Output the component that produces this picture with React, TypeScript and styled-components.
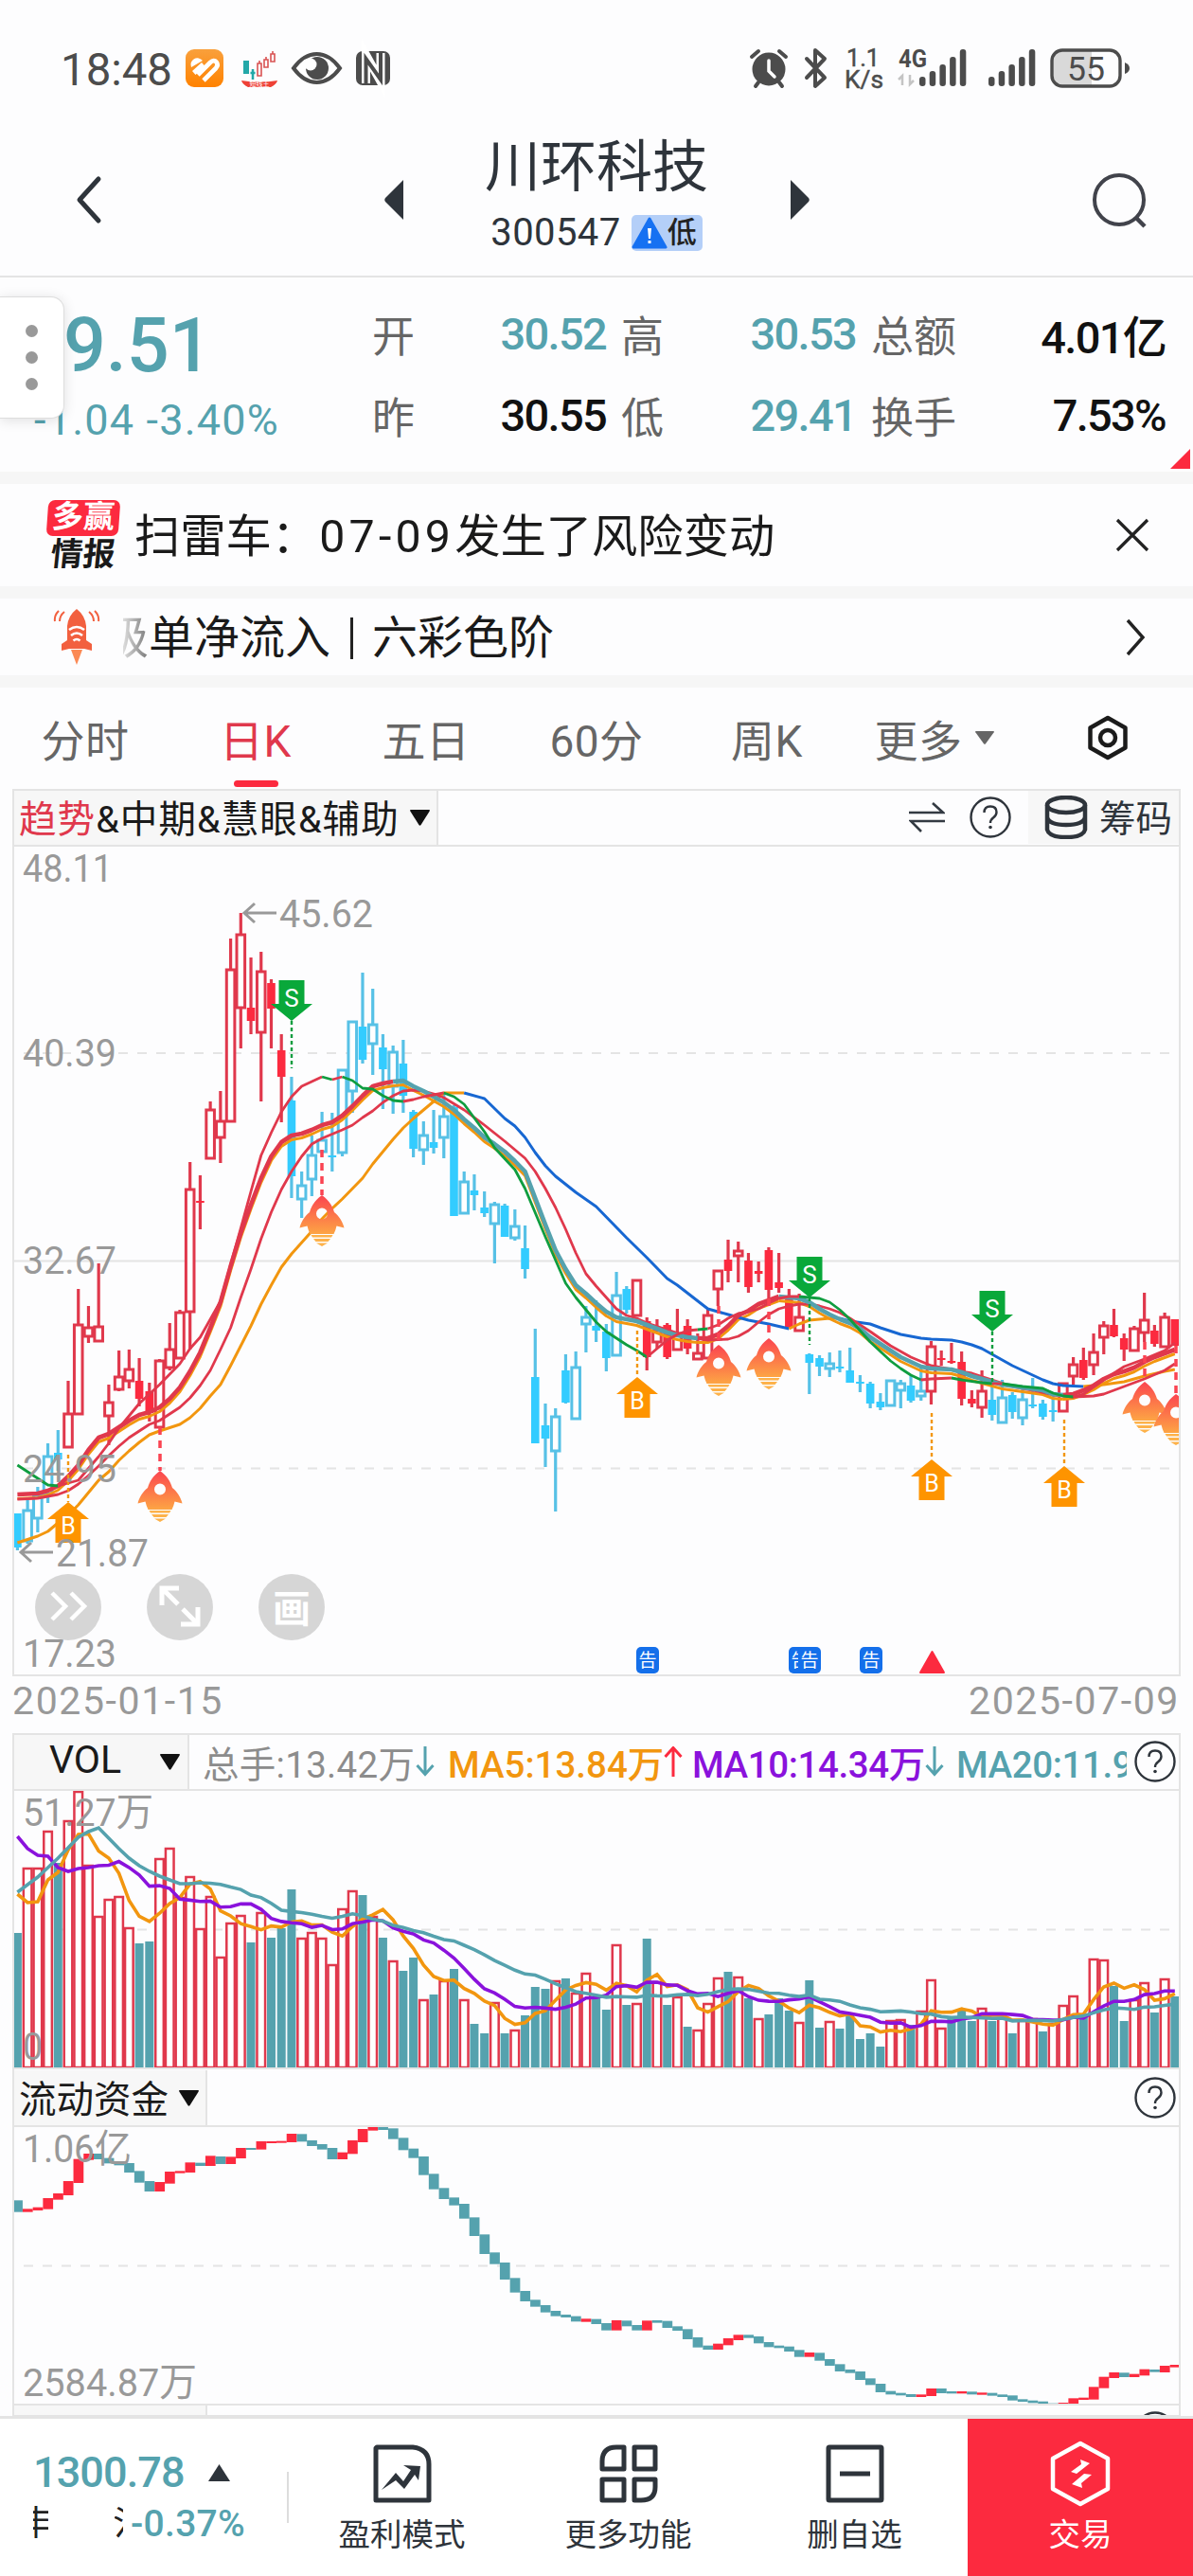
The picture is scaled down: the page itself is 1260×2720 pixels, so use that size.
import styled, { createGlobalStyle, css } from 'styled-components';

const RED = '#fc2a3f';
const RED_LINE = '#e0384c';
const TEAL = '#55a2ae';
const CYAN = '#33ccff';
const CYAN_LINE = '#57c1e6';
const ORANGE = '#f2960f';
const PURPLE = '#8a12dc';
const GREEN = '#0f9d3f';
const BLUE = '#1767d2';
const DARK = '#2e343b';
const LINE = '#e4e4e4';

// candle slots: 115 trading days between the left and right frame
const STEP = 10.723;
const cx = (i: number) => 18.4 + STEP * i;

type Candle = [kind: string, high: number, top: number, bottom: number, low: number];

// R/C = red/cyan solid body, r/c = red/cyan outlined body
const CANDLES: Candle[] = [
  ['C', 1598, 1598, 1634, 1637], ['c', 1581, 1595, 1627, 1630], ['c', 1570, 1579, 1603, 1618],
  ['c', 1524, 1538, 1577, 1587], ['C', 1510, 1534, 1541, 1553], ['r', 1458, 1493, 1528, 1528],
  ['r', 1361, 1399, 1493, 1493], ['r', 1379, 1402, 1411, 1418], ['r', 1334, 1401, 1416, 1416],
  ['r', 1462, 1481, 1495, 1526], ['r', 1426, 1454, 1467, 1469], ['r', 1425, 1446, 1458, 1466],
  ['R', 1434, 1458, 1477, 1485], ['R', 1460, 1469, 1492, 1501], ['r', 1435, 1437, 1507, 1507],
  ['r', 1397, 1425, 1444, 1447], ['r', 1383, 1386, 1434, 1434], ['r', 1227, 1256, 1385, 1425],
  ['R', 1241, 1268, 1270, 1298], ['r', 1163, 1172, 1223, 1223], ['r', 1152, 1184, 1201, 1228],
  ['r', 991, 1024, 1184, 1184], ['r', 964, 987, 1064, 1107], ['R', 1011, 1064, 1078, 1092],
  ['r', 1005, 1026, 1090, 1163], ['R', 1034, 1038, 1065, 1107], ['R', 1092, 1109, 1137, 1185],
  ['C', 1137, 1162, 1242, 1265], ['c', 1237, 1252, 1266, 1286], ['c', 1199, 1220, 1245, 1263],
  ['c', 1174, 1204, 1216, 1216], ['C', 1175, 1220, 1222, 1237], ['c', 1129, 1130, 1217, 1221],
  ['c', 1078, 1079, 1152, 1175], ['C', 1027, 1084, 1119, 1123], ['c', 1044, 1082, 1102, 1135],
  ['C', 1092, 1106, 1129, 1171], ['c', 1104, 1111, 1147, 1176], ['C', 1098, 1123, 1157, 1175],
  ['C', 1172, 1174, 1213, 1222], ['c', 1184, 1199, 1214, 1230], ['C', 1172, 1206, 1212, 1218],
  ['c', 1155, 1179, 1201, 1223], ['C', 1167, 1169, 1284, 1284], ['c', 1237, 1248, 1281, 1281],
  ['C', 1240, 1257, 1262, 1278], ['C', 1258, 1275, 1281, 1285], ['c', 1269, 1272, 1292, 1334],
  ['C', 1271, 1273, 1306, 1306], ['c', 1277, 1295, 1307, 1310], ['C', 1294, 1318, 1340, 1350],
  ['C', 1403, 1454, 1524, 1524], ['C', 1482, 1505, 1519, 1549], ['c', 1487, 1496, 1532, 1596],
  ['C', 1430, 1447, 1481, 1482], ['c', 1427, 1444, 1498, 1498], ['c', 1379, 1391, 1398, 1428],
  ['C', 1373, 1400, 1405, 1417], ['C', 1398, 1406, 1434, 1448], ['c', 1343, 1368, 1431, 1431],
  ['C', 1358, 1361, 1383, 1387], ['r', 1352, 1352, 1389, 1390], ['R', 1391, 1395, 1433, 1447],
  ['r', 1393, 1405, 1417, 1424], ['R', 1397, 1399, 1433, 1435], ['r', 1382, 1408, 1425, 1425],
  ['R', 1393, 1400, 1424, 1430], ['r', 1408, 1429, 1435, 1435], ['r', 1382, 1389, 1434, 1434],
  ['r', 1342, 1342, 1361, 1379], ['R', 1309, 1330, 1342, 1354], ['r', 1311, 1321, 1326, 1354],
  ['R', 1323, 1331, 1359, 1365], ['R', 1332, 1342, 1345, 1354], ['R', 1317, 1320, 1362, 1371],
  ['R', 1323, 1354, 1360, 1365], ['R', 1361, 1372, 1402, 1402], ['r', 1366, 1391, 1405, 1405],
  ['C', 1429, 1430, 1439, 1472], ['C', 1431, 1434, 1443, 1453], ['c', 1428, 1440, 1445, 1454],
  ['C', 1426, 1443, 1445, 1449], ['C', 1423, 1447, 1460, 1460], ['C', 1452, 1459, 1461, 1470],
  ['C', 1459, 1461, 1482, 1487], ['C', 1471, 1480, 1486, 1489], ['c', 1458, 1458, 1484, 1484],
  ['c', 1457, 1461, 1468, 1487], ['C', 1453, 1463, 1479, 1481], ['c', 1443, 1469, 1474, 1479],
  ['r', 1416, 1422, 1469, 1483], ['R', 1426, 1434, 1436, 1442], ['R', 1418, 1437, 1439, 1440],
  ['R', 1427, 1438, 1477, 1484], ['R', 1468, 1477, 1482, 1486], ['r', 1447, 1469, 1486, 1497],
  ['C', 1462, 1478, 1494, 1500], ['c', 1457, 1476, 1502, 1502], ['C', 1470, 1473, 1491, 1498],
  ['c', 1466, 1478, 1497, 1505], ['C', 1455, 1483, 1485, 1487], ['C', 1478, 1482, 1496, 1499],
  ['C', 1473, 1489, 1491, 1501], ['r', 1461, 1461, 1490, 1490], ['r', 1433, 1441, 1453, 1462],
  ['R', 1423, 1436, 1455, 1457], ['r', 1408, 1428, 1441, 1452], ['r', 1395, 1400, 1412, 1430],
  ['R', 1382, 1399, 1411, 1412], ['R', 1408, 1413, 1425, 1437], ['r', 1400, 1403, 1426, 1426],
  ['r', 1365, 1394, 1407, 1417], ['R', 1399, 1405, 1419, 1422], ['r', 1386, 1391, 1422, 1422],
  ['R', 1393, 1393, 1421, 1421],
];

// each part is "slot,y slot,y ..."; a new part starts where the colour flips
type Part = [color: string, points: string];

const TREND: Part[] = [
  [RED_LINE, '0,1578 2,1577 3,1574 4,1569 5,1559 6,1547 7,1531 8,1518 9,1514 10,1507 11,1500 12,1494 13,1491 14,1486 15,1477 16,1465 17,1448 18,1428 19,1402 20,1375 21,1337 22,1302 23,1272 24,1244 25,1221 26,1206 27,1199 28,1197 29,1193 30,1188 31,1185 32,1178 33,1168 34,1157 35,1147 36,1144 37,1142'],
  [TEAL, '37,1142 38,1141 39,1147 40,1152 41,1158 42,1164 43,1172 44,1182 45,1191 46,1201 47,1208 48,1216 49,1226 50,1237 51,1265 52,1293 53,1320 54,1340 55,1357 56,1366 57,1376 58,1385 59,1391 60,1393 61,1395 62,1399 63,1403 64,1407 65,1410 66,1412 67,1413'],
  [RED_LINE, '67,1413 68,1413 69,1409 70,1400 71,1389 72,1384 73,1377 74,1373 75,1369'],
  [TEAL, '75,1369 76,1370 77,1371 78,1375 79,1382 80,1388 81,1393 82,1397 83,1403 84,1412 85,1419 86,1426 87,1433 88,1438 89,1443 90,1445 92,1446 93,1449 94,1453 95,1456 96,1459 97,1462 99,1465 101,1468 102,1472 103,1473'],
  [RED_LINE, '103,1473 104,1472 105,1468 106,1463 107,1456 108,1451 109,1448 110,1444 111,1438 112,1433 113,1429 114,1425'],
];

const FAST: Part[] = [
  [GREEN, '0,1547 1,1554 2,1561 3,1568 4,1569'],
  [RED_LINE, '4,1569 5,1566 6,1563 8,1538 9,1524 10,1508 11,1495 12,1482 13,1472 14,1462 15,1451 16,1440 17,1424 18,1412 19,1393 20,1374 21,1335 22,1297 23,1258 24,1220 25,1196 26,1174 27,1158 28,1147 29,1142 30,1137'],
  [GREEN, '30,1137 31,1140'],
  [RED_LINE, '31,1140 32,1137'],
  [GREEN, '32,1137 33,1141 34,1149 35,1150 36,1157 37,1162 38,1163'],
  [RED_LINE, '38,1163 39,1161 40,1158 41,1156 42,1154'],
  [GREEN, '42,1154 43,1158 44,1166 46,1195 47,1212 49,1235 50,1255 52,1306 54,1355 55,1370 57,1396 58,1406 60,1420 61,1426 62,1433'],
  [RED_LINE, '62,1433 63,1424 64,1415 65,1409 66,1405 67,1404'],
  [GREEN, '67,1404 68,1403'],
  [RED_LINE, '68,1403 69,1399 70,1392 71,1387 72,1385 73,1382 74,1376 75,1371 76,1369 77,1369'],
  [GREEN, '77,1369 78,1370 79,1371 80,1375 81,1383 82,1393 84,1417 86,1437 87,1445 88,1452 89,1457'],
  [RED_LINE, '89,1457 90,1456 92,1455'],
  [GREEN, '92,1455 93,1457 95,1460 96,1461'],
  [RED_LINE, '96,1461 97,1461'],
  [GREEN, '97,1461 99,1464 101,1466 102,1471 103,1474 104,1475'],
  [RED_LINE, '104,1475 105,1472 107,1457 109,1443 111,1435 113,1426 114,1418'],
];

const MID: Part[] = [
  [RED_LINE, '0,1583 2,1582 4,1578 5,1574 6,1567 7,1558 8,1548 9,1537 10,1527 11,1518 12,1511 13,1504 14,1500 15,1493 16,1486 17,1476 18,1463 19,1447 20,1425 21,1402 22,1370 23,1340 24,1308 25,1280 26,1256 27,1237 28,1221 29,1208 30,1202 32,1193 33,1188 34,1180 35,1173 36,1164 37,1157 38,1152 39,1151 40,1152 41,1155 42,1159 44,1172 46,1188 48,1205 50,1223 51,1237 52,1255 53,1275 54,1298 55,1323 56,1345 57,1358 58,1370 59,1382 60,1389 61,1392 62,1397 64,1404 66,1411 68,1415 70,1414 71,1411 72,1405 73,1396 74,1388 75,1382 76,1379 77,1377 78,1377 79,1379 80,1382 81,1386 82,1392 83,1399 84,1406 86,1421 88,1433 90,1442 92,1446 94,1450 96,1457 98,1464 100,1468 102,1473 104,1475 106,1474 107,1472 109,1464 111,1456 113,1447 114,1440'],
];

const SLOW: Part[] = [
  [ORANGE, '0,1629 2,1622 3,1617 4,1608 5,1600 6,1589 7,1576 8,1563 9,1554 10,1542 11,1532 12,1523 13,1515 14,1511 16,1504 17,1497 18,1487 19,1474 20,1462 21,1442 22,1421 23,1400 24,1377 25,1357 26,1338 27,1324 29,1300 30,1287 31,1276 32,1266 34,1244 35,1229 37,1203 38,1191 39,1181 40,1172 42,1154 44,1154'],
  [BLUE, '44,1154 46,1160 48,1181 49,1189 50,1201 51,1217 52,1231 53,1242 55,1259 57,1274 60,1307 62,1328 64,1350 65,1357 68,1382 70,1388 72,1394 74,1398 76,1403'],
  [ORANGE, '76,1403 77,1398 78,1394 80,1392 81,1392'],
  [BLUE, '81,1392 82,1395 84,1398 85,1402 87,1409 89,1413 90,1414 92,1415 93,1417 94,1420 95,1424 96,1430 98,1442 99,1447 101,1457 102,1461 103,1463 105,1464'],
  [ORANGE, '105,1464 107,1462 109,1459 111,1453 113,1448 114,1446'],
];

const VOL_UP = [1, 2, 3, 5, 6, 7, 8, 9, 10, 11, 14, 15, 16, 17, 18, 19, 20, 21, 22, 24, 28, 29, 30, 31, 32, 33, 35, 37, 40, 42, 44, 47, 49, 53, 55, 56, 59, 61, 63, 65, 67, 68, 69, 71, 73, 77, 80, 86, 87, 89, 90, 91, 95, 97, 99, 100, 102, 103, 104, 106, 107, 110, 111, 113];
const VOL = [
  2041, 1972, 1972, 1933, 1967, 1922, 1891, 1969, 2023, 2005, 2002, 2035, 2052, 2050, 1962, 1951, 2003, 1981, 2036, 2002,
  2066, 2030, 2022, 2051, 2019, 2046, 2036, 1995, 2046, 2040, 2046, 2074, 2015, 1996, 2001, 2023, 2046, 2070, 2081, 2067,
  2111, 2106, 2091, 2079, 2111, 2137, 2147, 2114, 2147, 2143, 2128, 2098, 2100, 2091, 2089, 2104, 2083, 2109, 2122, 2053,
  2117, 2115, 2047, 2092, 2117, 2108, 2140, 2143, 2115, 2088, 2082, 2087, 2110, 2131, 2127, 2110, 2123, 2135, 2091, 2141,
  2134, 2142, 2125, 2153, 2147, 2161, 2133, 2132, 2138, 2123, 2090, 2141, 2131, 2121, 2134, 2120, 2134, 2130, 2147, 2133,
  2131, 2145, 2136, 2117, 2107, 2129, 2068, 2069, 2097, 2134, 2111, 2093, 2125, 2089, 2108,
];

// averages need history from before the first slot, so the lead-in is given
const average = (days: number, lead: number[]) =>
  VOL.map((_, i) => {
    const y =
      i < lead.length
        ? lead[i]
        : VOL.slice(i - days + 1, i + 1).reduce((a, b) => a + b, 0) / days;
    return `${cx(i)},${y}`;
  }).join(' ');

const MA5 = average(5, [2000, 2009, 2008, 1985]);
const MA10 = average(10, [1939, 1952, 1959, 1960, 1972, 1976, 1973, 1972, 1970]);
const MA20 = average(20, [1998, 1990, 1982, 1972, 1962, 1951, 1940, 1934, 1930, 1941, 1952, 1962, 1970, 1976, 1981, 1985, 1989, 1989, 1988]);

const FUND_UP = [1, 2, 3, 4, 5, 6, 7, 14, 15, 16, 17, 19, 21, 22, 24, 25, 26, 27, 32, 33, 34, 35, 56, 59, 62, 69, 70, 71, 78, 89, 90, 93, 95, 103, 104, 105, 106, 107, 108, 110, 111, 113, 114];
const FUND: [number, number][] = [
  [430, 467], [457, 467], [452, 462], [423, 458], [408, 428], [369, 414], [299, 375], [282, 302], [282, 300], [296, 313],
  [308, 319], [312, 342], [337, 374], [369, 402], [372, 402], [339, 377], [337, 344], [310, 342], [311, 321], [289, 321],
  [291, 315], [292, 315], [264, 297], [264, 270], [243, 269], [243, 249], [242, 248], [219, 246], [220, 244], [240, 258],
  [252, 269], [264, 300], [278, 300], [240, 283], [204, 246], [195, 209], [195, 207], [202, 236], [232, 271], [266, 296],
  [291, 350], [346, 395], [391, 426], [421, 446], [441, 488], [484, 543], [538, 600], [595, 632], [627, 681], [676, 722],
  [717, 750], [745, 767], [762, 785], [780, 797], [792, 801], [797, 814], [805, 815], [806, 822], [819, 842], [810, 842],
  [811, 829], [825, 842], [811, 842], [810, 818], [812, 834], [829, 843], [838, 870], [864, 896], [890, 903], [884, 903],
  [867, 889], [856, 873], [856, 866], [861, 883], [879, 895], [890, 898], [893, 909], [904, 926], [912, 926], [913, 938],
  [933, 954], [949, 972], [966, 977], [972, 999], [994, 1015], [1011, 1038], [1034, 1045], [1040, 1048], [1044, 1053], [1045, 1053],
  [1026, 1050], [1026, 1041], [1035, 1042], [1035, 1042], [1036, 1045], [1039, 1046], [1040, 1049], [1045, 1053], [1048, 1064], [1060, 1068],
  [1064, 1072], [1067, 1080], [1073, 1080], [1071, 1080], [1057, 1075], [1055, 1062], [1021, 1061], [989, 1025], [975, 993], [976, 990],
  [980, 990], [965, 985], [966, 974], [954, 975], [951, 959],
];

interface ILabelProps {
  x: number;
  y: number;
  w: number;
  children: string;
}

const Label = ({ x, y, w, children }: ILabelProps) => (
  <text x={x} y={y} textLength={w} lengthAdjust="spacingAndGlyphs" fontSize="41" fill="#999">
    {children}
  </text>
);

const Lines = ({ parts, width, dy = 0, color }: { parts: Part[]; width: number; dy?: number; color?: string }) => (
  <g fill="none" strokeWidth={width} strokeLinejoin="round">
    {parts.map(([stroke, points], n) => (
      <polyline
        key={n}
        stroke={color || stroke}
        points={points
          .split(' ')
          .map((p) => {
            const [i, y] = p.split(',').map(Number);
            return `${cx(i)},${y + dy}`;
          })
          .join(' ')}
      />
    ))}
  </g>
);

const Sell = ({ x, y, end }: { x: number; y: number; end: number }) => (
  <g>
    <path d={`M${x} ${y + 43}V${end}`} stroke={GREEN} strokeWidth="2.400" strokeDasharray="4 3" />
    <path d={`M${x - 13.5} ${y}h27v25h8.500l-22 18l-22-18h8.500z`} fill="#09a83a" />
    <text x={x} y={y + 28} fontSize="26" fill="#fff" textAnchor="middle">S</text>
  </g>
);

const Buy = ({ x, y, start }: { x: number; y: number; start: number }) => (
  <g>
    <path d={`M${x} ${start}V${y}`} stroke={ORANGE} strokeWidth="2.400" strokeDasharray="4 3" />
    <path d={`M${x} ${y}l22 18h-8.500v25h-27v-25h-8.500z`} fill="#fe9400" />
    <text x={x} y={y + 34} fontSize="25" fill="#fff" textAnchor="middle">B</text>
  </g>
);

const Rocket = ({ x, y, start }: { x: number; y: number; start: number }) => (
  <g>
    <path d={`M${x} ${start}V${y}`} stroke="#fa4352" strokeWidth="3.500" strokeDasharray="8 6" />
    <g transform={`translate(${x} ${y})`}>
      <path
        d="M0 0C7 5 11 11 13 18C18 22 22 28 23.500 34.500L15.500 32.500Q14.500 37 12.500 41H-12.500Q-14.500 37-15.500 32.500L-23.500 34.500C-22 28-18 22-13 18C-11 11-7 5 0 0ZM0 13.500a6 6 0 1 0 0 12a6 6 0 1 0 0-12Z"
        fill="url(#rocket)"
        fillRule="evenodd"
      />
      <path d="M-11.500 42h23l-1.500 2.500h-20zM-9 46h18l-2.500 3h-13zM-6 50.500H6L0 54z" fill="#fdb24a" />
    </g>
  </g>
);

const Notice = ({ x }: { x: number }) => (
  <g>
    <rect x={x} y="1739" width="24" height="28" rx="5" fill="#146fea" />
    <text x={x + 12} y="1760" fontSize="19" fill="#fff" textAnchor="middle">告</text>
  </g>
);

const Help = () => (
  <svg width="46" height="46" viewBox="0 0 46 46">
    <circle cx="23" cy="23" r="20.500" fill="none" stroke={DARK} strokeWidth="2.400" />
    <path d="M16.500 18q0-6.500 6.500-6.500t6.500 6q0 3.500-3.500 6q-3 2.200-3 5.500" fill="none" stroke={DARK} strokeWidth="2.400" />
    <circle cx="23" cy="33.500" r="1.800" fill={DARK} />
  </svg>
);

const Caret = ({ w = 21, h = 17, color = '#111' }: { w?: number; h?: number; color?: string }) => (
  <svg width={w} height={h} viewBox="0 0 20 16" preserveAspectRatio="none">
    <path d="M1 0h18q1.500 0 .7 1.500L11 15q-1 1.500-2 0L.3 1.500Q-.5 0 1 0z" fill={color} />
  </svg>
);

const StatusIcons = () => (
  <svg width="1260" height="110" viewBox="0 0 1260 110">
    <defs>
      <linearGradient id="app" x1="0" y1="0" x2="0" y2="1">
        <stop offset="0" stopColor="#f9a03c" />
        <stop offset="1" stopColor="#ff8200" />
      </linearGradient>
    </defs>
    <text x="64" y="90" fontSize="48" textLength="118" lengthAdjust="spacingAndGlyphs" fill="#4c4c4c">18:48</text>
    <rect x="196" y="52" width="40" height="40" rx="9" fill="url(#app)" />
    <path d="M202 71a7 7 0 0 1 12-7zM203 75l10-9l3.500 4l-10 9z" fill="#fff" />
    <path d="M209 79l13-13q4-3.500 6.500-.5t-.5 6.500L215 85" fill="none" stroke="#fff" strokeWidth="4.800" />
    <rect x="257" y="64" width="6" height="14" fill="#23a8a8" />
    <path d="M267 73v11M264.500 77h5" stroke="#23a8a8" strokeWidth="2.500" />
    <g fill="none" stroke="#d95353" strokeWidth="1.600">
      <path d="M272 67h4v13h-4zM279 63h4v8h-4zM286 57h4v8h-4zM274 64v3M281 60v3M288 54v3" />
    </g>
    <path d="M255 85q19 3 38 0q-1 4-7 7h-24q-6-3-7-7z" fill="#ee4136" />
    <text x="274" y="91" fontSize="7" fill="#fff" textAnchor="middle">短线王</text>
    <path d="M310 72q11-15 24.500-15t24.500 15q-11 15-24.500 15t-24.500-15z" fill="#fff" stroke="#4c4c4c" strokeWidth="4" />
    <circle cx="335" cy="72" r="12" fill="#4c4c4c" />
    <circle cx="328" cy="68" r="6.500" fill="#fff" />
    <rect x="376" y="54" width="36" height="36" rx="7" fill="#4c4c4c" />
    <path d="M386.500 88V58L402 86V56" fill="none" stroke="#fff" strokeWidth="9" />
    <path d="M386.500 90V62L402 84V54" fill="none" stroke="#4c4c4c" strokeWidth="4" />

    <g stroke="#4c4c4c" fill="none" strokeLinecap="round">
      <circle cx="812" cy="73" r="15.500" fill="#4c4c4c" strokeWidth="4" />
      <path d="M794 60l7-6M830 60l-7-6" strokeWidth="4" />
      <path d="M801 87l-3 4M823 87l3 4" strokeWidth="4" />
      <path d="M812 64v11l6 6" stroke="#fff" strokeWidth="3.500" />
      <path d="M852 62l19 20l-10 9V53l10 9l-19 20" strokeWidth="4" strokeLinejoin="round" />
    </g>
    <g fill="#4c4c4c">
      <text x="894" y="70" fontSize="26" textLength="35" lengthAdjust="spacingAndGlyphs" stroke="#4c4c4c" strokeWidth=".5">1.1</text>
      <text x="892" y="93" fontSize="26" textLength="41" lengthAdjust="spacingAndGlyphs" stroke="#4c4c4c" strokeWidth=".5">K/s</text>
      <text x="949" y="71" fontSize="25" fontWeight="700" textLength="30" lengthAdjust="spacingAndGlyphs">4G</text>
      <path d="M953 90V80l-4 4M961 79v10l4-4" fill="none" stroke="#c4c4c4" strokeWidth="2.500" />
      {[971, 1044].map((x) => (
        <g key={x}>
          {[10, 16, 23, 31, 39].map((h, i) => (
            <rect key={h} x={x + i * 10.700} y={91 - h} width="6.500" height={h} rx="3" />
          ))}
        </g>
      ))}
    </g>
    <path d="M1120 54h33v36h-33q-8 0-8-8V62q0-8 8-8z" fill="#d9d9d9" />
    <rect x="1111" y="53" width="72" height="38" rx="11" fill="none" stroke="#4c4c4c" strokeWidth="3.400" />
    <path d="M1188 66q5 2 5 6t-5 6z" fill="#4c4c4c" />
    <text x="1147" y="84.500" fontSize="35" textAnchor="middle" textLength="40" lengthAdjust="spacingAndGlyphs" fill="#4c4c4c">55</text>
  </svg>
);

const KChart = () => (
  <ChartSvg viewBox="14 894 1232 875" $height={875}>
    <defs>
      <linearGradient id="rocket" x1="0" y1="0" x2="0" y2="1">
        <stop offset="0" stopColor="#fb4450" />
        <stop offset="1" stopColor="#fda544" />
      </linearGradient>
    </defs>
    <path d="M14 1112H1246M14 1550.500H1246" stroke={LINE} strokeWidth="2" strokeDasharray="10 10" strokeDashoffset="9" />
    <path d="M14 1331.500H1246" stroke={LINE} strokeWidth="2" />
    <Label x={24} y={931} w={95}>48.11</Label>
    <Label x={24} y={1126} w={99}>40.39</Label>
    <Label x={24} y={1345} w={99}>32.67</Label>
    <Label x={24} y={1760} w={99}>17.23</Label>
    {CANDLES.map(([kind, high, top, bottom, low], i) => {
      const x = cx(i);
      const solid = kind === 'R' || kind === 'C';
      const red = kind.toLowerCase() === 'r';
      const line = red ? RED_LINE : CYAN_LINE;
      return (
        <g key={i}>
          <path d={`M${x} ${high}V${top}M${x} ${bottom}V${low}`} stroke={line} strokeWidth="3.200" />
          {solid ? (
            <rect x={x - 4.300} y={top} width="8.600" height={bottom - top} fill={red ? RED : CYAN} />
          ) : (
            <rect x={x - 4.300} y={top} width="8.600" height={bottom - top} fill="#fff" stroke={line} strokeWidth="3" />
          )}
        </g>
      );
    })}
    <Lines parts={TREND} width={3} dy={4.500} color={ORANGE} />
    <Lines parts={SLOW} width={3} />
    <Lines parts={MID} width={2.800} />
    <Lines parts={TREND} width={4.600} />
    <Lines parts={FAST} width={2.800} />
    <Buy x={72} y={1586} start={1536} />
    <Buy x={673} y={1454} start={1405} />
    <Buy x={984} y={1541} start={1492} />
    <Buy x={1124} y={1548} start={1499} />
    <Sell x={308} y={1035} end={1128} />
    <Sell x={855} y={1327} end={1420} />
    <Sell x={1048} y={1363} end={1462} />
    <Rocket x={169} y={1553} start={1507} />
    <Rocket x={340} y={1262} start={1214} />
    <Rocket x={759} y={1420} start={1379} />
    <Rocket x={812} y={1413} start={1371} />
    <Rocket x={1209} y={1459} start={1417} />
    <Rocket x={1242} y={1472} start={1421} />
    <Label x={24} y={1565} w={99}>24.95</Label>
    <g stroke="#999" strokeWidth="3" fill="none">
      <path d="M292 964h-33M269 954l-11 10l11 10" />
      <path d="M56 1639h-33M33 1629l-11 10l11 10" />
    </g>
    <Label x={295} y={979} w={99}>45.62</Label>
    <Label x={59} y={1654} w={98}>21.87</Label>
    <Notice x={672} />
    <Notice x={833} />
    <Notice x={843} />
    <Notice x={908} />
    <path d="M984.500 1744l12.500 22h-25z" fill={RED} stroke={RED} strokeWidth="2" strokeLinejoin="round" />
  </ChartSvg>
);

const VolumeChart = () => (
  <ChartSvg viewBox="14 1891 1232 293" $height={293}>
    <path d="M14 2037.500H1246" stroke={LINE} strokeWidth="2" strokeDasharray="10 10" strokeDashoffset="9" />
    {VOL.map((y, i) =>
      VOL_UP.includes(i) ? (
        <rect key={i} x={cx(i) - 4.300} y={y + 1} width="8.600" height={2182 - y} fill="#fff" stroke={RED_LINE} strokeWidth="2.500" />
      ) : (
        <rect key={i} x={cx(i) - 4.500} y={y} width="9" height={2184 - y} fill={TEAL} />
      )
    )}
    <g fill="none" strokeWidth="3.600">
      <polyline points={MA5} stroke={ORANGE} />
      <polyline points={MA10} stroke={PURPLE} />
      <polyline points={MA20} stroke={TEAL} />
    </g>
    <Label x={24} y={1928} w={138}>51.27万</Label>
    <Label x={24} y={2175} w={21}>0</Label>
  </ChartSvg>
);

const FundChart = () => (
  <ChartSvg viewBox="14 2246 1232 293" $height={293}>
    <path d="M14 2392.500H1246" stroke={LINE} strokeWidth="2" strokeDasharray="10 10" strokeDashoffset="9" />
    {FUND.map(([top, bottom], i) => (
      <rect
        key={i}
        x={13.200 + i * 10.723}
        y={2180 + top / 3}
        width="10.723"
        height={(bottom - top) / 3}
        fill={FUND_UP.includes(i) ? RED : TEAL}
      />
    ))}
    <Label x={24} y={2283} w={115}>1.06亿</Label>
    <Label x={24} y={2530} w={184}>2584.87万</Label>
  </ChartSvg>
);

const App = () => (
  <>
    <GlobalStyle />
    <Screen>
      <StatusBar>
        <StatusIcons />
      </StatusBar>

      <Header>
        <HeaderSide>
          <svg width="32" height="52" viewBox="0 0 32 52">
            <path d="M26 4L6 26l20 22" fill="none" stroke={DARK} strokeWidth="5" strokeLinecap="round" strokeLinejoin="round" />
          </svg>
        </HeaderSide>
        <svg width="20" height="42" viewBox="0 0 20 42">
          <path d="M20 0v42L1 23q-1.500-2 0-4z" fill={DARK} />
        </svg>
        <HeaderTitle>
          <StockName>川环科技</StockName>
          <StockCode>
            <Text $size={40} $color={DARK} $spacing={0.4}>300547</Text>
            <RiskTag>
              <svg width="38" height="34" viewBox="0 0 38 34">
                <path d="M19 2L36 32H2z" fill="#1671f2" stroke="#1671f2" strokeWidth="3" strokeLinejoin="round" />
                <path d="M17 12h4l-1 11h-2zM17.500 25h3v3h-3z" fill="#fff" />
              </svg>
              低
            </RiskTag>
          </StockCode>
        </HeaderTitle>
        <svg width="20" height="42" viewBox="0 0 20 42">
          <path d="M0 0v42L19 23q1.500-2 0-4z" fill={DARK} />
        </svg>
        <HeaderSide $right>
          <svg width="62" height="62" viewBox="0 0 62 62">
            <circle cx="31" cy="31" r="26" fill="none" stroke="#41434b" strokeWidth="4" />
            <path d="M49 50l9 9" stroke="#41434b" strokeWidth="4.500" />
          </svg>
        </HeaderSide>
      </Header>

      <Quote>
        <PriceBlock>
          <Price>29.51</Price>
          <Text $size={45} $color={TEAL} $spacing={1.2}>-1.04 -3.40%</Text>
        </PriceBlock>
        <QuoteGrid>
          <Name>开</Name>
          <Value $color={TEAL}>30.52</Value>
          <Name>高</Name>
          <Value $color={TEAL}>30.53</Value>
          <Name>总额</Name>
          <Value>4.01亿</Value>
          <Name>昨</Name>
          <Value>30.55</Value>
          <Name>低</Name>
          <Value $color={TEAL}>29.41</Value>
          <Name>换手</Name>
          <Value>7.53%</Value>
        </QuoteGrid>
        <Handle>
          <i />
          <i />
          <i />
        </Handle>
        <Corner />
      </Quote>

      <Banner $height={108}>
        <Logo>
          <LogoTop>多赢</LogoTop>
          <LogoBottom>情报</LogoBottom>
        </Logo>
        <Headline>
          扫雷车：<span>07-09</span>发生了风险变动
        </Headline>
        <BannerEnd>
          <svg width="36" height="36" viewBox="0 0 36 36">
            <path d="M2 2l32 32M34 2L2 34" stroke="#222" strokeWidth="3.200" />
          </svg>
        </BannerEnd>
      </Banner>

      <Banner $height={81}>
        <RocketIcon>
          <svg width="50" height="60" viewBox="0 0 50 60">
            <path d="M25 0q9 7 10 18v15l6 4v7l-8-2H17l-8 2v-7l6-4V18Q16 7 25 0z" fill="#f2603f" />
            <path d="M19 43h12l-6 16z" fill="#fb8a55" />
            <g fill="none" stroke="#fff" strokeWidth="2.600">
              <path d="M17 22q8-6 16 0M19 28q6-5 12 0M21.500 33.500q3.500-3 7 0" />
            </g>
            <g fill="none" stroke="#f2603f" strokeWidth="2">
              <path d="M6 2q-5 5-4 11M12 3q-5 4-5 10M44 2q5 5 4 11M38 3q5 4 5 10" />
            </g>
          </svg>
        </RocketIcon>
        <Ticker>
          <Faded>级</Faded>单净流入 <Pipe /> 六彩色阶
        </Ticker>
        <BannerEnd $pad={50}>
          <svg width="22" height="40" viewBox="0 0 22 40">
            <path d="M3 2l16 18L3 38" fill="none" stroke="#222" strokeWidth="3.400" />
          </svg>
        </BannerEnd>
      </Banner>

      <Tabs>
        <Tab>分时</Tab>
        <Tab $active>日K</Tab>
        <Tab>五日</Tab>
        <Tab>60分</Tab>
        <Tab>周K</Tab>
        <Tab $more>
          更多 <Caret w={20} h={14} color="#666" />
        </Tab>
        <Tab>
          <svg width="46" height="48" viewBox="0 0 46 48">
            <path d="M23 3l18.500 10.500v21L23 45L4.500 34.500v-21z" fill="none" stroke="#1b1b1b" strokeWidth="4.500" strokeLinejoin="round" />
            <circle cx="23" cy="24" r="8" fill="none" stroke="#1b1b1b" strokeWidth="4.500" />
          </svg>
        </Tab>
      </Tabs>

      <Panel>
        <PanelHead $height={60}>
          <Picker $width={449} $spacing={1.1}>
            <p>
              <b>趋势</b>&amp;中期&amp;慧眼&amp;辅助
            </p>
            <Caret />
          </Picker>
          <HeadTools>
            <svg width="38" height="36" viewBox="0 0 38 36">
              <path d="M0 13h36L25 3M38 22H2l11 11" fill="none" stroke="#333a42" strokeWidth="2.600" />
            </svg>
            <Help />
          </HeadTools>
          <Chips>
            <svg width="46" height="46" viewBox="0 0 46 46">
              <g fill="none" stroke={DARK} strokeWidth="4.500">
                <ellipse cx="23" cy="10" rx="20" ry="8" />
                <path d="M3 10v26q2 8 20 8t20-8V10M3 23q2 8 20 8t20-8" />
              </g>
            </svg>
            <p>筹码</p>
          </Chips>
        </PanelHead>
        <KChart />
        <FloatTools>
          <RoundButton>
            <svg width="44" height="36" viewBox="0 0 44 36">
              <path d="M5 4l14 14L5 32M25 4l14 14l-14 14" fill="none" stroke="#fff" strokeWidth="4.500" />
            </svg>
          </RoundButton>
          <RoundButton>
            <svg width="44" height="44" viewBox="0 0 44 44">
              <path d="M21 3H3v18M3 3l17 17M23 41h18V23M41 41L25 25" fill="none" stroke="#fff" strokeWidth="5" />
            </svg>
          </RoundButton>
          <RoundButton>画</RoundButton>
        </FloatTools>
      </Panel>

      <Dates>
        <span>2025-01-15</span>
        <span>2025-07-09</span>
      </Dates>

      <Panel>
        <PanelHead $height={60}>
          <Picker $width={186} $wide>
            <p>VOL</p>
            <Caret />
          </Picker>
          <Averages>
            <Average $color="#8c8c8c" $width={245} $spacing={0.3}>总手:13.42万<Down /></Average>
            <Average $color={ORANGE} $width={244} $bold>MA5:13.84万<Up /></Average>
            <Average $color={PURPLE} $width={265} $bold $spacing={-0.4}>MA10:14.34万<Down /></Average>
            <Average $color={TEAL} $width={265} $bold $spacing={-0.4}>MA20:11.91万</Average>
          </Averages>
          <HelpSlot>
            <Help />
          </HelpSlot>
        </PanelHead>
        <VolumeChart />
      </Panel>

      <Panel $flat>
        <PanelHead $height={60}>
          <Picker $width={205}>
            <p>流动资金</p>
            <Caret />
          </Picker>
          <HelpSlot>
            <Help />
          </HelpSlot>
        </PanelHead>
        <FundChart />
      </Panel>

      <Panel $flat $rest>
        <PanelHead $height={60}>
          <Picker $width={205} />
          <HelpSlot>
            <Help />
          </HelpSlot>
        </PanelHead>
      </Panel>

      <BottomBar>
        <IndexBlock>
          <IndexRow>
            <Text $size={45} $color={TEAL} $spacing={-0.9} $weight={500}>1300.78</Text>
            <svg width="23" height="18" viewBox="0 0 23 18">
              <path d="M11.500 0L23 18H0z" fill={DARK} />
            </svg>
          </IndexRow>
          <IndexRow>
            <Clip $width={16} $shift={-15}>丰</Clip>
            <Clip $width={9} $shift={-2} $before={70} $after={8}>氵</Clip>
            <Text $size={39} $color={TEAL} $spacing={0.3} $weight={500}>-0.37%</Text>
          </IndexRow>
        </IndexBlock>
        <Action>
          <svg width="62" height="62" viewBox="0 0 62 62">
            <path d="M4 3h38q17 2 17 18v38H3V4z" fill="none" stroke={DARK} strokeWidth="5" strokeLinejoin="round" />
            <path d="M9 48l15-18l8 9l8-12l-8-5l18 1l-2 15l-4-6l-11 15l-9-9z" fill={DARK} />
          </svg>
          盈利模式
        </Action>
        <Action>
          <svg width="62" height="62" viewBox="0 0 62 62">
            <g fill="none" stroke={DARK} strokeWidth="5" strokeLinejoin="round">
              <path d="M18 3h8v23H3v-8Q3 3 18 3zM37 3h22v23H37zM3 37h23v22H3zM37 37h22v8q0 14-15 14h-7z" />
            </g>
          </svg>
          更多功能
        </Action>
        <Action>
          <svg width="62" height="62" viewBox="0 0 62 62">
            <rect x="3" y="3" width="56" height="56" rx="1" fill="none" stroke={DARK} strokeWidth="5" />
            <path d="M15 31h32" stroke={DARK} strokeWidth="5" />
          </svg>
          删自选
        </Action>
        <Trade>
          <svg width="64" height="72" viewBox="0 0 64 72">
            <path d="M32 4l29 16v32L32 68L3 52V20z" fill="none" stroke="#fff" strokeWidth="4.500" strokeLinejoin="round" />
            <path d="M32 21l10 4l-14 11l-6-2l11-8zM44 37l-11 9l1 5l-11-4l13-11z" fill="#fff" />
          </svg>
          交易
        </Trade>
      </BottomBar>
    </Screen>
  </>
);

const Down = () => (
  <svg width="20" height="32" viewBox="0 0 20 32">
    <path d="M10 0v29M1.500 20L10 29.500l8.500-9.500" fill="none" stroke={TEAL} strokeWidth="3" />
  </svg>
);

const Up = () => (
  <svg width="20" height="32" viewBox="0 0 20 32">
    <path d="M10 32V3M1.500 11L10 1.500L18.500 11" fill="none" stroke={RED} strokeWidth="3" />
  </svg>
);

export default App;

const GlobalStyle = createGlobalStyle`
  * {
    box-sizing: border-box;
  }
  body {
    margin: 0;
    background: #fff;
    font-family: Roboto, "Noto Sans CJK SC", sans-serif;
  }
  svg {
    display: block;
    flex: none;
  }
`;

const Screen = styled.div`
  display: flex;
  flex-direction: column;
  width: 1260px;
  height: 2720px;
  overflow: hidden;
  background: #fdfdfe;
  color: #1a1a1a;
`;

const StatusBar = styled.div`
  height: 110px;
`;

const Header = styled.header`
  display: flex;
  align-items: center;
  justify-content: center;
  height: 183px;
  border-bottom: 2px solid ${LINE};
`;

const HeaderSide = styled.div<{ $right?: boolean }>`
  display: flex;
  flex: 1;
  padding: 20px 47px 0 78px;
  justify-content: ${({ $right }) => ($right ? 'flex-end' : 'flex-start')};
  & + svg,
  & ~ svg {
    margin-top: 20px;
  }
`;

const HeaderTitle = styled.div`
  display: flex;
  flex-direction: column;
  align-items: center;
  width: 409px;
  padding-top: 10px;
`;

const StockName = styled.h1`
  margin: 0;
  padding-top: 5px;
  color: ${DARK};
  font-size: 59px;
  font-weight: 400;
  line-height: 76px;
`;

const StockCode = styled.div`
  display: flex;
  align-items: center;
  gap: 11px;
  height: 62px;
`;

const Text = styled.span<{ $size: number; $color: string; $spacing: number; $weight?: number }>`
  color: ${({ $color }) => $color};
  font-size: ${({ $size }) => $size}px;
  font-weight: ${({ $weight }) => $weight || 400};
  letter-spacing: ${({ $spacing }) => $spacing}px;
  line-height: 1.2;
  white-space: pre;
`;

const RiskTag = styled.span`
  display: flex;
  align-items: center;
  width: 75px;
  height: 38px;
  border-radius: 5px;
  background: #b4cff8;
  color: #222;
  font-size: 31px;
  font-weight: 500;
  line-height: 38px;
`;

const Quote = styled.section`
  position: relative;
  display: flex;
  height: 205px;
`;

const PriceBlock = styled.div`
  display: flex;
  flex-direction: column;
  width: 393px;
  padding: 26px 0 0 36px;
`;

const Price = styled.strong`
  margin: 0 0 6px -14px;
  color: ${TEAL};
  font-size: 79px;
  font-weight: 500;
  letter-spacing: 0;
  line-height: 92px;
`;

const QuoteGrid = styled.div`
  display: grid;
  grid-template-columns: 44px 203px 60px 204px 107px 1fr;
  grid-auto-rows: 86px;
  flex: 1;
  padding: 16px 29px 0 0;
  align-items: center;
`;

const Name = styled.span`
  color: #666;
  font-size: 45px;
  white-space: nowrap;
  &:not(:nth-child(6n + 1)) {
    padding-left: 16px;
  }
`;

const Value = styled.span<{ $color?: string }>`
  color: ${({ $color }) => $color || '#111'};
  font-size: 47px;
  font-weight: 500;
  letter-spacing: -1.7px;
  text-align: right;
  white-space: nowrap;
`;

const Handle = styled.div`
  position: absolute;
  top: 20px;
  left: 0;
  display: flex;
  flex-direction: column;
  align-items: center;
  justify-content: center;
  gap: 15px;
  width: 68px;
  height: 129px;
  border: 1px solid #ddd;
  border-left: 0;
  border-radius: 0 14px 14px 0;
  background: #fff;
  box-shadow: 0 2px 14px rgba(0, 0, 0, 0.12);
  i {
    width: 13px;
    height: 13px;
    border-radius: 50%;
    background: #999;
  }
`;

const Corner = styled.div`
  position: absolute;
  right: 3px;
  bottom: 3px;
  border-bottom: 21px solid ${RED};
  border-left: 21px solid transparent;
`;

const Banner = styled.section<{ $height: number }>`
  display: flex;
  align-items: center;
  box-sizing: content-box;
  height: ${({ $height }) => $height}px;
  padding-left: 48px;
  border-top: 13px solid #f6f6f6;
`;

const Logo = styled.div`
  display: flex;
  flex-direction: column;
  align-items: center;
  width: 79px;
  margin: 0 15px 4px 0;
  font-weight: 700;
`;

const LogoTop = styled.span`
  width: 76px;
  height: 38px;
  border-radius: 7px;
  background: ${RED};
  color: #fff;
  font-size: 33px;
  line-height: 36px;
  text-align: center;
  transform: skewX(-4deg);
`;

const LogoBottom = styled.span`
  height: 32px;
  font-size: 34px;
  line-height: 38px;
  transform: skewX(-6deg);
`;

const Headline = styled.p`
  margin: 0;
  padding-top: 4px;
  font-size: 48.3px;
  line-height: 70px;
  white-space: nowrap;
  span {
    margin-left: 2px;
    letter-spacing: 4.2px;
  }
`;

const BannerEnd = styled.span<{ $pad?: number }>`
  margin-left: auto;
  padding-right: ${({ $pad }) => $pad || 46}px;
`;

const RocketIcon = styled.span`
  width: 82px;
  padding-left: 8px;
`;

const Ticker = styled.div`
  display: flex;
  align-items: center;
  overflow: hidden;
  padding-top: 2px;
  font-size: 48px;
  line-height: 70px;
`;

const Faded = styled.span`
  width: 27px;
  direction: rtl;
  overflow: hidden;
  background: linear-gradient(90deg, #ddd, #777);
  background-clip: text;
  color: transparent;
`;

const Pipe = styled.i`
  width: 3px;
  height: 44px;
  margin: 0 20px 0 21px;
  background: #222;
`;

const Tabs = styled.nav`
  display: grid;
  grid-template-columns: repeat(7, 180px);
  height: 121px;
  border-top: 13px solid #f6f6f6;
`;

const Tab = styled.div<{ $active?: boolean; $more?: boolean }>`
  position: relative;
  display: flex;
  align-items: center;
  justify-content: center;
  gap: 13px;
  height: 106px;
  padding-right: ${({ $more }) => ($more ? 7 : 0)}px;
  color: ${({ $active }) => ($active ? RED_LINE : '#666')};
  font-size: 46px;
  letter-spacing: 0.5px;
  ${({ $active }) =>
    $active &&
    css`
      &::after {
        content: '';
        position: absolute;
        bottom: 1px;
        left: 67px;
        width: 47px;
        height: 7px;
        border-radius: 4px;
        background: ${RED};
      }
    `}
`;

const Panel = styled.section<{ $flat?: boolean; $rest?: boolean }>`
  position: relative;
  width: 1232px;
  margin-left: 14px;
  outline: 2px solid ${LINE};
  outline-offset: -1px;
  ${({ $flat }) =>
    $flat &&
    css`
      padding-top: 2px;
    `}
  ${({ $rest }) =>
    $rest &&
    css`
      flex: 1;
      min-height: 0;
      overflow: hidden;
      padding-top: 0;
    `}
`;

const PanelHead = styled.div<{ $height: number }>`
  display: flex;
  align-items: center;
  height: ${({ $height }) => $height}px;
  border-bottom: 2px solid ${LINE};
  p {
    margin: 0 0 4px;
  }
`;

const Picker = styled.div<{ $width: number; $wide?: boolean; $spacing?: number }>`
  display: flex;
  align-items: center;
  justify-content: space-between;
  flex: none;
  width: ${({ $width }) => $width}px;
  height: 100%;
  padding: ${({ $wide }) => ($wide ? '0 8px 0 38px' : '0 7px 0 6px')};
  border-right: 2px solid ${LINE};
  background: #f7f7f7;
  font-size: ${({ $wide }) => ($wide ? 41 : 39.5)}px;
  letter-spacing: ${({ $spacing }) => $spacing || 0}px;
  white-space: nowrap;
  b {
    color: ${RED_LINE};
    font-weight: 400;
  }
`;

const HeadTools = styled.div`
  display: flex;
  align-items: center;
  gap: 25px;
  margin-left: auto;
  padding-right: 17px;
`;

const Chips = styled.div`
  display: flex;
  align-items: center;
  gap: 12px;
  width: 160px;
  height: 56px;
  padding-left: 17px;
  background: #f7f7f7;
  color: ${DARK};
  font-size: 38.5px;
`;

const ChartSvg = styled.svg<{ $height: number }>`
  width: 1232px;
  height: ${({ $height }) => $height}px;
`;

const FloatTools = styled.div`
  position: absolute;
  bottom: 37px;
  left: 23px;
  display: flex;
  gap: 48px;
`;

const RoundButton = styled.button`
  display: flex;
  align-items: center;
  justify-content: center;
  width: 70px;
  height: 70px;
  padding: 0 0 2px;
  border: 0;
  border-radius: 50%;
  background: rgba(208, 208, 208, 0.88);
  color: #fff;
  font: 700 40px 'Noto Sans CJK SC', sans-serif;
  line-height: 64px;
`;

const Dates = styled.div`
  display: flex;
  justify-content: space-between;
  height: 62px;
  padding: 0 14px 0 13px;
  color: #999;
  font-size: 41px;
  line-height: 54px;
  letter-spacing: 1.6px;
`;

const Averages = styled.div`
  display: flex;
  align-items: center;
  gap: 14px;
  width: 990px;
  padding-left: 14px;
  overflow: hidden;
`;

const Average = styled.span<{ $color: string; $width: number; $bold?: boolean; $spacing?: number }>`
  display: flex;
  align-items: center;
  justify-content: space-between;
  flex: none;
  width: ${({ $width }) => $width}px;
  color: ${({ $color }) => $color};
  font-size: 38.5px;
  font-weight: ${({ $bold }) => ($bold ? 500 : 400)};
  letter-spacing: ${({ $spacing }) => $spacing || 0}px;
  white-space: nowrap;
`;

const HelpSlot = styled.div`
  margin-left: auto;
  padding-right: 3px;
`;

const BottomBar = styled.footer`
  display: grid;
  grid-template-columns: 305px repeat(3, 239px) 1fr;
  flex: none;
  height: 169px;
  border-top: 3px solid ${LINE};
  background: #fff;
`;

const IndexBlock = styled.div`
  position: relative;
  padding: 30px 0 0 35px;
  &::after {
    content: '';
    position: absolute;
    top: 56px;
    right: 0;
    width: 2px;
    height: 54px;
    background: #ddd;
  }
`;

const IndexRow = styled.div`
  display: flex;
  align-items: center;
  height: 54px;
  svg {
    margin-left: 25px;
  }
`;

const Clip = styled.span<{ $width: number; $shift: number; $before?: number; $after?: number }>`
  width: ${({ $width }) => $width}px;
  height: 38px;
  margin: 0 ${({ $after }) => $after || 0}px 0 ${({ $before }) => $before || 0}px;
  overflow: hidden;
  color: #222;
  font-size: 36px;
  line-height: 38px;
  text-indent: ${({ $shift }) => $shift}px;
`;

const Action = styled.div`
  display: flex;
  flex-direction: column;
  align-items: center;
  gap: 10px;
  padding-top: 27px;
  color: ${DARK};
  font-size: 33.5px;
  line-height: 48px;
`;

const Trade = styled(Action)`
  gap: 5px;
  padding-top: 22px;
  background: ${RED};
  color: #fff;
`;
